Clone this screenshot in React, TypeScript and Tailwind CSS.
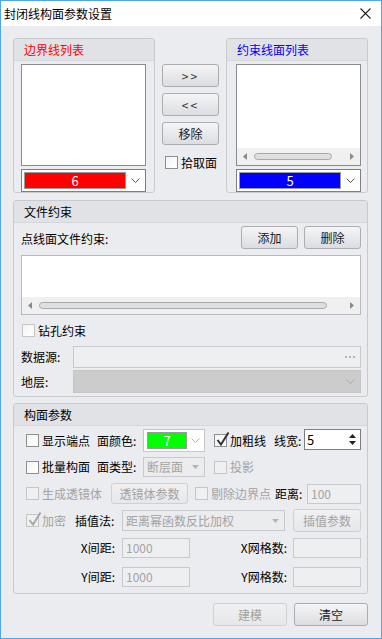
import type { ReactNode } from "react";

const FONT = { fontFamily: '"Noto Sans CJK SC", "Microsoft YaHei", sans-serif' };

function Panel({ title, titleClass = "text-black", className = "", children }: { title: string; titleClass?: string; className?: string; children: ReactNode }) {
  return (
    <div className={`border border-[#c9cacd] rounded-[3px] bg-[#ebecf0] ${className}`}>
      <div className={`h-[22px] bg-[#e1e2e6] border-b border-[#d6d7da] rounded-t-[3px] pl-[10px] flex items-center text-[12px] ${titleClass}`}>
        {title}
      </div>
      {children}
    </div>
  );
}

function Btn({ children, className = "", disabled = false }: { children: ReactNode; className?: string; disabled?: boolean }) {
  return (
    <div
      className={`flex items-center justify-center rounded-[3px] border text-[12px] ${
        disabled
          ? "border-[#cfd0d3] bg-linear-to-b from-[#f1f1f3] to-[#e6e7ea] text-[#a2a2a2]"
          : "border-[#acadb0] bg-linear-to-b from-[#f5f5f7] to-[#dcdde1] text-[#1a1a1a]"
      } ${className}`}
    >
      {children}
    </div>
  );
}

function Check({ checked = false, disabled = false }: { checked?: boolean; disabled?: boolean }) {
  return (
    <div
      className={`relative w-[13px] h-[13px] shrink-0 border ${
        disabled ? "border-[#c6c6c6] bg-[#f0f0f2]" : "border-[#8e8f8f] bg-linear-to-br from-[#f4f4f4] to-white"
      }`}
    >
      {checked && (
        <svg className="absolute left-[1px] -top-[4px]" width="14" height="16" viewBox="0 0 14 16">
          <path d="M1.5 9 L5 13.5 L12.5 1.5" fill="none" stroke={disabled ? "#a8a8a8" : "#333"} strokeWidth="2" />
        </svg>
      )}
    </div>
  );
}

function CheckLabel({ label, checked = false, disabled = false, className = "" }: { label: string; checked?: boolean; disabled?: boolean; className?: string }) {
  return (
    <div className={`flex items-center ${className}`}>
      <Check checked={checked} disabled={disabled} />
      <span className={`ml-[3px] text-[12px] leading-none ${disabled ? "text-[#a3a3a3]" : "text-black"}`}>{label}</span>
    </div>
  );
}

function Chevron({ color = "#555" }: { color?: string }) {
  return (
    <svg width="9" height="6" viewBox="0 0 9 6">
      <path d="M0.5 0.5 L4.5 4.5 L8.5 0.5" fill="none" stroke={color} strokeWidth="1" />
    </svg>
  );
}

function Tri({ color = "#b5b5b5" }: { color?: string }) {
  return (
    <svg width="7" height="4" viewBox="0 0 7 4">
      <path d="M0 0 L7 0 L3.5 4 Z" fill={color} />
    </svg>
  );
}

function HScroll({ thumbLeft, thumbWidth }: { thumbLeft: number; thumbWidth: number }) {
  return (
    <div className="h-[17px] bg-[#f0f0f0] flex items-center relative">
      <svg className="absolute left-[6px]" width="4" height="7" viewBox="0 0 4 7">
        <path d="M4 0 L0 3.5 L4 7 Z" fill="#8a8a8a" />
      </svg>
      <div
        className="absolute h-[7px] rounded-full border border-[#a9a9ab] bg-[#dedfe1]"
        style={{ left: thumbLeft, width: thumbWidth }}
      />
      <svg className="absolute right-[6px]" width="4" height="7" viewBox="0 0 4 7">
        <path d="M0 0 L4 3.5 L0 7 Z" fill="#8a8a8a" />
      </svg>
    </div>
  );
}

function ColorCombo({ color, value, textColor = "text-white", chevron = "#555" }: { color: string; value: string; textColor?: string; chevron?: string }) {
  return (
    <div className="h-[23px] w-[125px] border border-[#7d7e80] bg-white flex items-center pl-[2px]">
      <div className={`h-[17px] w-[102px] border border-[#9a9a9a] flex items-center justify-center text-[13px] ${textColor}`} style={{ backgroundColor: color }}>
        {value}
      </div>
      <div className="flex-1 flex justify-center">
        <Chevron color={chevron} />
      </div>
    </div>
  );
}

function Field({ value = "", className = "" }: { value?: string; className?: string }) {
  return (
    <div className={`border border-[#c8c9cc] bg-[#eeeff1] flex items-center pl-[3px] text-[12px] text-[#a3a3a3] ${className}`}>{value}</div>
  );
}

function DisCombo({ value, className = "" }: { value: string; className?: string }) {
  return (
    <div className={`border border-[#c8c9cc] bg-[#ebecee] flex items-center pl-[3px] pr-[5px] text-[12px] text-[#a3a3a3] ${className}`}>
      <span className="flex-1">{value}</span>
      <Tri />
    </div>
  );
}

export default function App() {
  return (
    <div className="w-[382px] h-[639px] border border-[#4fa6ec] bg-[#ebecf0] flex flex-col overflow-hidden" style={FONT}>
      <div className="h-[25px] bg-white flex items-center pl-[3px] pr-[10px] shrink-0">
        <span className="text-[12px] text-black flex-1">封闭线构面参数设置</span>
        <svg width="11" height="11" viewBox="0 0 11 11">
          <path d="M0.5 0.5 L10.5 10.5 M10.5 0.5 L0.5 10.5" stroke="#222" strokeWidth="1.1" />
        </svg>
      </div>

      <div className="flex-1 pl-[12px] pr-[13px] flex flex-col">
        {/* top lists */}
        <div className="flex mt-[12px]">
          <Panel title="边界线列表" titleClass="text-[#ff0000]" className="w-[142px] h-[155px]">
            <div className="pl-[7px]">
              <div className="mt-[3px] w-[125px] h-[102px] border border-[#8a8b8e] bg-white" />
              <div className="mt-[3px]">
                <ColorCombo color="#ff0000" value="6" />
              </div>
            </div>
          </Panel>

          <div className="w-[57px] mx-[7px] flex flex-col">
            <Btn className="mt-[26px] h-[23px] text-[#333] tracking-[2px]">&gt;&gt;</Btn>
            <Btn className="mt-[6px] h-[23px] text-[#333] tracking-[2px]">&lt;&lt;</Btn>
            <Btn className="mt-[6px] h-[23px]">移除</Btn>
            <CheckLabel label="拾取面" className="mt-[11px] ml-[3px]" />
          </div>

          <Panel title="约束线面列表" titleClass="text-[#0000ff]" className="w-[142px] h-[155px]">
            <div className="pl-[9px]">
              <div className="mt-[3px] w-[125px] h-[102px] border border-[#8a8b8e] bg-white flex flex-col justify-end">
                <HScroll thumbLeft={17} thumbWidth={78} />
              </div>
              <div className="mt-[3px]">
                <ColorCombo color="#0000ff" value="5" />
              </div>
            </div>
          </Panel>
        </div>

        {/* file constraint */}
        <Panel title="文件约束" className="mt-[7px] h-[197px]">
          <div className="pl-[7px] pr-[6px]">
            <div className="flex items-end mt-[3px]">
              <span className="flex-1 text-[12px] pb-[1px]">点线面文件约束:</span>
              <Btn className="w-[57px] h-[23px]">添加</Btn>
              <Btn className="w-[57px] h-[23px] ml-[6px]">删除</Btn>
            </div>
            <div className="mt-[6px] h-[60px] border border-[#b9babd] bg-white flex flex-col justify-end">
              <HScroll thumbLeft={17} thumbWidth={288} />
            </div>
            <CheckLabel label="钻孔约束" className="mt-[9px] ml-[1px] [&>div]:border-[#c6c6c6] [&>div]:bg-[#f0f0f2]" />
            <div className="flex items-center mt-[9px]">
              <span className="w-[52px] text-[12px]">数据源:</span>
              <div className="flex-1 h-[22px] border border-[#c8c9cc] bg-[#eeeff1] flex items-center justify-end gap-[2px] pr-[5px]">
                <span className="w-[2px] h-[2px] bg-[#b4b4b8]" />
                <span className="w-[2px] h-[2px] bg-[#b4b4b8]" />
                <span className="w-[2px] h-[2px] bg-[#b4b4b8]" />
              </div>
            </div>
            <div className="flex items-center mt-[2px]">
              <span className="w-[52px] text-[12px]">地层:</span>
              <div className="flex-1 h-[23px] border border-[#c5c5c5] bg-[#cccccc] flex items-center justify-end pr-[5px]">
                <Chevron color="#aaa" />
              </div>
            </div>
          </div>
        </Panel>

        {/* surface parameters */}
        <Panel title="构面参数" className="mt-[6px] h-[191px]">
          <div className="pl-[12px] pr-[6px]">
            <div className="flex items-center mt-[3px] h-[23px]">
              <CheckLabel label="显示端点" className="w-[71px]" />
              <span className="w-[46px] text-[12px]">面颜色:</span>
              <div className="w-[62px] h-[23px] border border-[#c6c7ca] bg-white flex items-center pl-[3px]">
                <div className="w-[40px] h-[17px] bg-[#00ff00] border border-[#9a9a9a] flex items-center justify-center text-white text-[13px]">7</div>
                <div className="flex-1 flex justify-center">
                  <Chevron color="#b0b0b0" />
                </div>
              </div>
              <CheckLabel label="加粗线" checked className="ml-[9px] w-[60px]" />
              <span className="w-[30px] text-[12px]">线宽:</span>
              <div className="w-[57px] h-[21px] self-start border border-[#7d7e80] bg-white flex items-center pl-[2px] text-[13px]">
                <span className="flex-1">5</span>
                <div className="flex flex-col items-center gap-[3px] pr-[4px]">
                  <svg width="7" height="4" viewBox="0 0 7 4"><path d="M0 4 L7 4 L3.5 0 Z" fill="#222" /></svg>
                  <svg width="7" height="4" viewBox="0 0 7 4"><path d="M0 0 L7 0 L3.5 4 Z" fill="#222" /></svg>
                </div>
              </div>
            </div>

            <div className="flex items-center mt-[5px] h-[20px]">
              <CheckLabel label="批量构面" className="w-[71px]" />
              <span className="w-[46px] text-[12px]">面类型:</span>
              <DisCombo value="断层面" className="w-[62px] h-[20px]" />
              <CheckLabel label="投影" disabled className="ml-[9px]" />
            </div>

            <div className="flex items-center mt-[6px] h-[21px]">
              <CheckLabel label="生成透镜体" disabled className="w-[85px]" />
              <Btn disabled className="w-[77px] h-[21px]">透镜体参数</Btn>
              <CheckLabel label="剔除边界点" disabled className="ml-[7px] w-[80px]" />
              <span className="w-[32px] text-[12px]">距离:</span>
              <Field value="100" className="w-[54px] h-[20px]" />
            </div>

            <div className="flex items-center mt-[5px] h-[23px]">
              <CheckLabel label="加密" checked disabled className="w-[49px]" />
              <span className="w-[47px] text-[12px]">插值法:</span>
              <DisCombo value="距离幂函数反比加权" className="w-[163px] h-[21px]" />
              <Btn disabled className="ml-[8px] w-[68px] h-[23px]">插值参数</Btn>
            </div>

            <div className="flex items-center mt-[6px] h-[20px]">
              <span className="w-[96px] text-right text-[12px] pr-[7px]">X间距:</span>
              <Field value="1000" className="w-[68px] h-[20px]" />
              <span className="w-[103px] text-right text-[12px] pr-[6px]">X网格数:</span>
              <Field className="w-[68px] h-[20px]" />
            </div>

            <div className="flex items-center mt-[9px] h-[20px]">
              <span className="w-[96px] text-right text-[12px] pr-[7px]">Y间距:</span>
              <Field value="1000" className="w-[68px] h-[20px]" />
              <span className="w-[103px] text-right text-[12px] pr-[6px]">Y网格数:</span>
              <Field className="w-[68px] h-[20px]" />
            </div>
          </div>
        </Panel>

        <div className="flex justify-end mt-[9px]">
          <Btn disabled className="w-[74px] h-[23px]">建模</Btn>
          <Btn className="w-[74px] h-[23px] ml-[7px]">清空</Btn>
        </div>
      </div>
    </div>
  );
}
